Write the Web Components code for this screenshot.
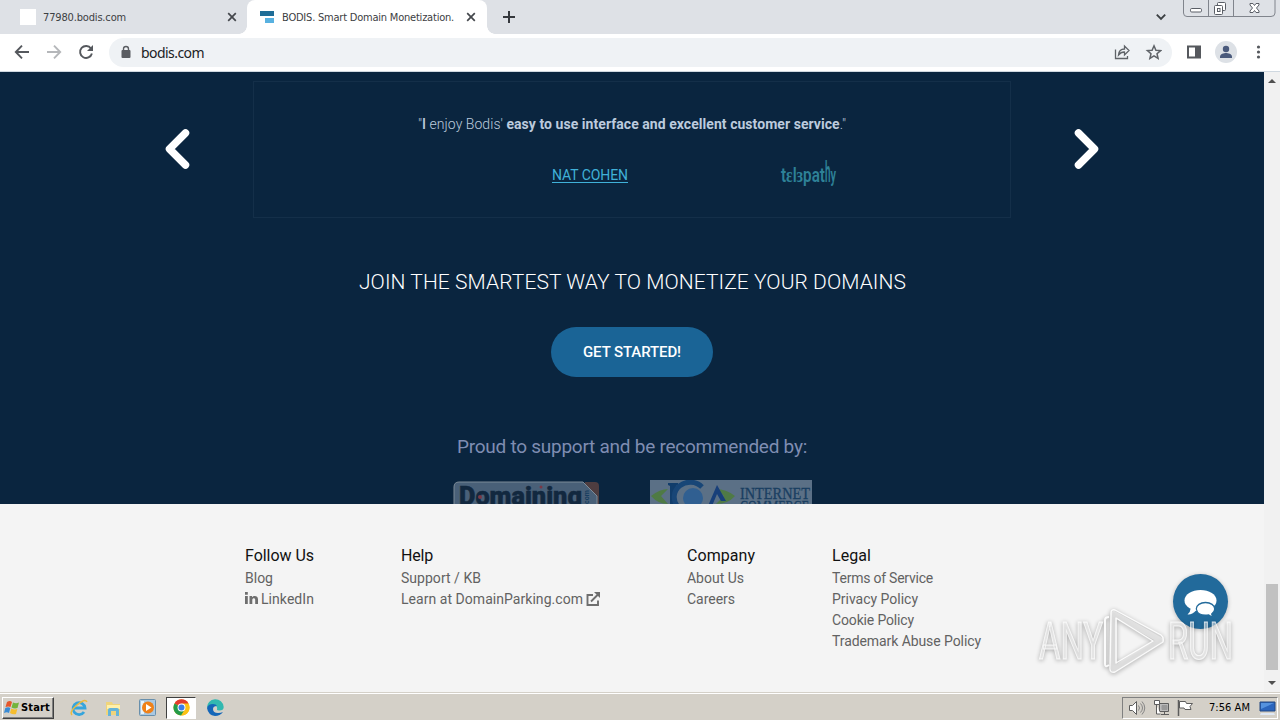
<!DOCTYPE html>
<html lang="en">
<head>
<meta charset="utf-8">
<title>BODIS. Smart Domain Monetization.</title>
<style>
  body { margin: 0; width: 1280px; height: 720px; overflow: hidden; font-family: Roboto, "Liberation Sans", sans-serif; }
</style>
</head>
<body>
<desktop-screen>
  <browser-tabs slot="tabs"></browser-tabs>
  <browser-toolbar slot="toolbar"></browser-toolbar>
  <site-hero slot="page"></site-hero>
  <site-footer slot="page">
    <footer-column heading="Follow Us" w="69" style="width:156px">
      <footer-link w="28">Blog</footer-link>
      <footer-link w="53" icon="in">LinkedIn</footer-link>
    </footer-column>
    <footer-column heading="Help" w="32" style="width:286px">
      <footer-link w="80">Support / KB</footer-link>
      <footer-link w="182" icon="out">Learn at DomainParking.com</footer-link>
    </footer-column>
    <footer-column heading="Company" w="68" style="width:145px">
      <footer-link w="57">About Us</footer-link>
      <footer-link w="48">Careers</footer-link>
    </footer-column>
    <footer-column heading="Legal" w="39" style="width:180px">
      <footer-link w="101">Terms of Service</footer-link>
      <footer-link w="86">Privacy Policy</footer-link>
      <footer-link w="82">Cookie Policy</footer-link>
      <footer-link w="149">Trademark Abuse Policy</footer-link>
    </footer-column>
  </site-footer>
  <scroll-bar slot="scroll"></scroll-bar>
  <win-taskbar slot="taskbar"></win-taskbar>
  <chat-bubble slot="over"></chat-bubble>
  <water-mark slot="over"></water-mark>
</desktop-screen>

<script>
// small helper: every component sets its own shadow markup
class Base extends HTMLElement {
  constructor() {
    super();
    this.attachShadow({ mode: 'open' });
  }
  connectedCallback() {
    this.shadowRoot.innerHTML = '<style>:host,*{box-sizing:border-box}:host{flex:none}svg{display:block;flex:none}</style>' + this.render();
  }
  render() { return '<slot></slot>'; }
}

// single line text, letter spacing is tuned so that the line is "w" pixels wide
class FitText extends Base {
  render() {
    return `<style>:host{display:inline-block;white-space:nowrap;flex:none}</style><slot></slot>`;
  }
  connectedCallback() {
    super.connectedCallback();
    const w = parseFloat(this.getAttribute('w'));
    if (!w) return;
    const real = this.getBoundingClientRect().width;
    this.style.letterSpacing = ((w - real) / this.textContent.length).toFixed(3) + 'px';
  }
}

class DesktopScreen extends Base {
  render() {
    return `
    <style>
      :host{display:flex;flex-direction:column;width:1280px;height:720px;position:relative;overflow:hidden;background:#f4f4f4}
      .view{display:flex;height:620px;flex:none}
      .page{width:1264px;display:flex;flex-direction:column}
    </style>
    <slot name="tabs"></slot>
    <slot name="toolbar"></slot>
    <div class="view"><div class="page"><slot name="page"></slot></div><slot name="scroll"></slot></div>
    <slot name="taskbar"></slot>
    <slot name="over"></slot>`;
  }
}

class BrowserTabs extends Base {
  render() {
    const close = '<svg width="10" height="10" viewBox="0 0 10 10"><path d="M1.2 1.2l7.6 7.6M8.8 1.2L1.2 8.8" stroke="#44474c" stroke-width="1.7"/></svg>';
    return `
    <style>
      :host{display:flex;height:34px;background:#dee1e6;font:11px "DejaVu Sans Condensed","Noto Sans",sans-serif;color:#3c4043}
      .tab{display:flex;align-items:center;height:34px}
      .one{width:247px;padding:0 10px 0 20px}
      .two{width:240px;padding:0 11px 0 13px;background:#fff;border-radius:8px 8px 0 0;position:relative}
      .two::before,.two::after{content:"";position:absolute;bottom:0;width:8px;height:8px}
      .two::before{left:-8px;background:radial-gradient(circle at 0 0,#dee1e6 7.5px,#fff 8px)}
      .two::after{right:-8px;background:radial-gradient(circle at 100% 0,#dee1e6 7.5px,#fff 8px)}
      .fav{width:16px;height:16px;background:#fff;margin-right:7px}
      .gap{flex:1}
      .plus{margin:11px 0 0 15px}
      .chev{margin:13px 17px 0 0}
    </style>
    <div class="tab one"><div class="fav"></div><fit-text w="83">77980.bodis.com</fit-text><div class="gap"></div>${close}</div>
    <div class="tab two">
      <svg width="14" height="12" viewBox="0 0 14 12" style="margin-right:8px"><path d="M0 0h14v5H0z" fill="#1f6d97"/><path d="M5 7h9v5H5z" fill="#58b1e0"/></svg>
      <fit-text w="172">BODIS. Smart Domain Monetization.</fit-text><div class="gap"></div>${close}
    </div>
    <svg class="plus" width="14" height="12" viewBox="0 0 14 12"><path d="M7 0v12M1 6h12" stroke="#35383d" stroke-width="2"/></svg>
    <div class="gap"></div>
    <svg class="chev" width="10" height="8" viewBox="0 0 10 8"><path d="M.8 1.6L5 5.8l4.200-4.200" fill="none" stroke="#3c4043" stroke-width="1.900"/></svg>
    <svg width="97" height="18" viewBox="0 0 97 18" fill="none">
      <path d="M.5 0v13q0 3.500 3.500 3.500h84q4 0 4-3.500V0M25.500 0v16M50.500 0v16" stroke="#80848c"/>
      <g stroke="#5a5e66"><rect x="7.500" y="8.500" width="11" height="3.500" rx="1.200" fill="#fff"/>
      <rect x="34.500" y="2.500" width="8" height="8" rx="1" fill="#fff"/><rect x="31.500" y="5.500" width="8" height="9" rx="1" fill="#fff"/><rect x="34.500" y="8.500" width="2.500" height="3"/>
      <path d="M67 3.500h3l1.500 2 1.500-2h3v1.500L73.500 8l2.500 3v1.500h-3l-1.500-2-1.500 2h-3V11l2.500-3L67 5z" fill="#fff"/></g>
    </svg>`;
  }
}

class BrowserToolbar extends Base {
  render() {
    return `
    <style>
      :host{display:flex;align-items:center;height:38px;background:#fff;border-bottom:1px solid #cfd8e0;padding-left:14px}
      .box{display:flex;align-items:center;width:1063px;height:29px;margin-left:15px;padding:0 10px 0 11px;border-radius:15px;background:#eff2f5;font:14px "Noto Sans",sans-serif;color:#202124}
      .gap{flex:1}
    </style>
    <svg width="80" height="20" viewBox="0 0 80 20" fill="none" stroke-width="1.900" style="margin-top:-1px">
      <path d="M15 10H2M8 3.700L1.800 10 8 16.300" stroke="#55585d"/>
      <path d="M33 10h13M40 3.700l6.200 6.300L40 16.300" stroke="#b5b7ba"/>
      <path d="M77 6.500A6 6 0 1 0 77.900 11.500" stroke="#55585d"/><path d="M79 3v6h-6z" fill="#55585d"/>
    </svg>
    <div class="box">
      <svg width="12" height="14" viewBox="0 0 12 14" style="margin:-1px 9px 0 0"><rect x="1.500" y="5" width="9" height="8" rx="1" fill="#5a5d62"/><path d="M3.500 6V4a2.500 2.500 0 0 1 5 0v2" fill="none" stroke="#5a5d62" stroke-width="1.400"/></svg>
      <fit-text w="63">bodis.com</fit-text><div class="gap"></div>
      <svg width="48" height="18" viewBox="0 0 48 18" fill="none" stroke="#5f6368" stroke-width="1.300" style="margin-top:-1px">
        <path d="M1.500 6.500v9h12v-2.500"/><path d="M4.500 12Q5 6 10.500 6V3l4.500 4.500L10.500 12V9Q7 8.800 4.500 12z"/>
        <path d="M40 2.800l1.900 4.400 4.700.4-3.600 3.100 1.100 4.700-4.100-2.500-4.100 2.500L37 10.700l-3.600-3.100 4.700-.4z" stroke-width="1.500"/>
      </svg>
    </div>
    <svg width="108" height="24" viewBox="0 0 108 24" style="margin-top:-1px">
      <rect x="16" y="6.500" width="12" height="11" fill="none" stroke="#55585d" stroke-width="2"/><path d="M23 6h6v12h-6z" fill="#55585d"/>
      <circle cx="54" cy="12" r="11" fill="#dde1e6"/><circle cx="54" cy="9" r="3.200" fill="#4a5a7c"/><path d="M48 18v-1.500c0-2.400 4-3.500 6-3.500s6 1.100 6 3.500V18z" fill="#4a5a7c"/>
      <g fill="#55585d"><circle cx="86.500" cy="7" r="1.600"/><circle cx="86.500" cy="12" r="1.600"/><circle cx="86.500" cy="17" r="1.600"/></g>
    </svg>`;
  }
}

class TestimonialCard extends Base {
  render() {
    return `
    <style>
      :host{display:block;width:758px;height:137px;border:1px solid #142f49;color:#bccbdd;padding:32px 0 0 164px;font-size:14px;font-weight:300}
      .quote{height:20px;line-height:20px}
      b{font-weight:700}
      .by{display:flex;align-items:center;height:42px;margin-top:20px;padding-left:134px}
      a{color:#40b1d8;font-weight:400}
      a fit-text{text-decoration:underline;text-underline-offset:2px}
    </style>
    <div class="quote"><fit-text w="428">"<span style="font-weight:500">I</span> enjoy Bodis' <b>easy to use interface and excellent customer service</b>."</fit-text></div>
    <div class="by"><a><fit-text w="76">NAT COHEN</fit-text></a>
      <svg width="60" height="36" viewBox="0 0 60 36" style="margin-left:151px" font-family="Roboto" font-weight="600" fill="#2e8197">
        <g font-size="21" transform="translate(0 25)">
          <text x="2" textLength="44" lengthAdjust="spacingAndGlyphs">tɛlɜpat</text>
          <text x="46" font-size="29" textLength="5.500" lengthAdjust="spacingAndGlyphs">h</text>
          <text x="51.500" textLength="5.500" lengthAdjust="spacingAndGlyphs">y</text>
        </g>
      </svg>
    </div>`;
  }
}

class SiteHero extends Base {
  render() {
    return `
    <style>
      :host{display:flex;flex-direction:column;align-items:center;height:432px;background:#0a253f;overflow:hidden}
      .slider{display:flex;align-items:center;justify-content:space-between;width:936px;height:137px;margin-top:9px;flex:none}
      .arrow{margin-top:-2px}
      h2{margin:51px 0 0 1px;height:26px;line-height:26px;font-size:21px;font-weight:300;color:#fff;flex:none}
      .btn{display:flex;align-items:center;justify-content:center;width:162px;height:50px;margin-top:32px;border-radius:25px;background:#1a6496;color:#fff;font-size:15px;font-weight:500;flex:none}
      .proud{margin-top:57px;height:26px;line-height:26px;font-size:19px;font-weight:400;color:#7f8db2;flex:none}
      .logos{display:flex;width:360px;height:60px;margin-top:20px;flex:none}
    </style>
    <div class="slider">
      <svg class="arrow" width="28" height="42" viewBox="0 0 28 42"><path d="M21.500 5l-16 16 16 16" fill="none" stroke="#fff" stroke-width="7.500" stroke-linecap="round" stroke-linejoin="round"/></svg>
      <testimonial-card></testimonial-card>
      <svg class="arrow" width="28" height="42" viewBox="0 0 28 42"><path d="M6.500 5l16 16-16 16" fill="none" stroke="#fff" stroke-width="7.500" stroke-linecap="round" stroke-linejoin="round"/></svg>
    </div>
    <h2><fit-text w="547">JOIN THE SMARTEST WAY TO MONETIZE YOUR DOMAINS</fit-text></h2>
    <div class="btn"><fit-text w="98">GET STARTED!</fit-text></div>
    <div class="proud"><fit-text w="350">Proud to support and be recommended by:</fit-text></div>
    <div class="logos">
      <svg width="148" height="50" viewBox="-1 0 148 50">
        <path d="M132 2h10q4 0 4 4v44h-14z" fill="#4e3d40"/>
        <path d="M6 2h124l14 14v34H1V7q0-5 5-5z" fill="#496078" stroke="#7d8b98"/>
        <text x="6" y="24.500" font-family="Roboto" font-weight="900" font-size="26" fill="#12283f" stroke="#12283f" stroke-width=".5" textLength="123" lengthAdjust="spacingAndGlyphs">Domaining</text>
        <circle cx="27" cy="17" r="2" fill="#7b3846"/><circle cx="88" cy="7" r="1.500" fill="#7b3846"/>
        <text x="-26" y="136" transform="rotate(-90)" font-family="Roboto" font-weight="700" font-size="7" fill="#173d5f">.com</text>
      </svg>
      <svg width="162" height="50" viewBox="0 0 162 50" style="margin-left:50px">
        <path d="M0 0h162v50H0z" fill="#5b7086"/>
        <path d="M1 16Q10 9 18 9L11 16l7 8Q8 24 1 16zM85 16Q76 9 66 9l8 7-8 8q12 0 19-8z" fill="#4f7a45"/>
        <path d="M18 3h10v2l-2 1v18h-6V6l-2-1z" fill="#113d6b"/>
        <path d="M52 7A16 15 0 1 0 50 29" fill="none" stroke="#184677" stroke-width="5"/>
        <circle cx="43" cy="18" r="10" fill="#305f91"/>
        <path d="M58 26L67 5l9 16h-5l-4-7-5 12z" fill="#183f7a"/>
        <g font-family="Liberation Serif" font-size="16" fill="#193e61" stroke="#193e61" stroke-width=".3"><text x="90" y="18.500" textLength="70" lengthAdjust="spacingAndGlyphs">INTERNET</text>
        <text x="90" y="32" textLength="69" lengthAdjust="spacingAndGlyphs">COMMERCE</text></g>
      </svg>
    </div>`;
  }
}

class SiteFooter extends Base {
  render() {
    return `
    <style>:host{display:flex;height:188px;background:#f4f4f4;padding:41px 0 0 245px}</style>
    <slot></slot>`;
  }
}

class FooterColumn extends Base {
  render() {
    return `
    <style>
      :host{display:flex;flex-direction:column;flex:none}
      .head{height:23px;line-height:22px;font-size:16px;color:#111}
    </style>
    <div class="head"><fit-text w="${this.getAttribute('w')}">${this.getAttribute('heading')}</fit-text></div>
    <slot></slot>`;
  }
}

class FooterLink extends Base {
  connectedCallback() {
    const text = this.textContent;
    super.connectedCallback();
    this.shadowRoot.querySelector('fit-text').textContent = text;
    this.shadowRoot.querySelector('fit-text').connectedCallback();
  }
  render() {
    const icon = this.getAttribute('icon');
    const before = icon === 'in' ? '<svg width="16" height="15" viewBox="0 0 16 15"><path d="M0 4h2.800v8H0zM0 0h2.800v2.800H0zM4.500 4H7v1.200C8.500 3.200 13 3.200 13 7.200V12h-2.800V7.800c0-2.200-2.900-2-2.900 0V12H4.500z" fill="#6e6e6e"/></svg>' : '';
    const after = icon === 'out' ? '<svg width="15" height="16" viewBox="0 0 15 16" style="margin-left:3px" fill="none" stroke="#6e6e6e" stroke-width="1.900"><path d="M7 3H1.500v10H12V8.500M5 9.500L12 2.500"/><path d="M8 0h6v6z" fill="#6e6e6e" stroke="none"/></svg>' : '';
    return `
    <style>:host{display:flex;align-items:center;height:21px;line-height:21px;font-size:14px;color:#626262}</style>
    ${before}<fit-text w="${this.getAttribute('w')}"></fit-text>${after}`;
  }
}

class ScrollBar extends Base {
  render() {
    return `
    <style>
      :host{display:flex;flex-direction:column;align-items:center;width:16px;height:620px;background:#f1f1f1;padding-top:7px}
      .thumb{width:12px;height:86px;margin:501px 0 11px;background:#c1c1c1}
    </style>
    <svg width="8" height="4" viewBox="0 0 8 4"><path d="M0 4l4-4 4 4z" fill="#505050"/></svg>
    <div class="thumb"></div>
    <svg width="8" height="4" viewBox="0 0 8 4"><path d="M0 0l4 4 4-4z" fill="#505050"/></svg>`;
  }
}

class WinTaskbar extends Base {
  render() {
    return `
    <style>
      :host{display:flex;align-items:center;height:28px;background:#d4d0c8;border-top:1px solid #d4d0c8;box-shadow:inset 0 1px #fff;padding:2px 2px 0;font:11px "DejaVu Sans Condensed","Noto Sans",sans-serif;color:#000}
      .start{display:flex;align-items:center;width:52px;height:22px;padding-left:1px;border:1px solid;border-color:#fff #404040 #404040 #fff;box-shadow:inset -1px -1px #808080;font-weight:700}
      .app{width:30px;height:22px;margin-left:4px;display:flex;align-items:center;justify-content:center}
      .app.on{background:#fff;border:1px solid;border-color:#404040 #fff #fff #404040}
      .gap{flex:1}
      .tray{display:flex;align-items:center;width:156px;height:22px;border:1px solid;border-color:#808080 #fff #fff #808080;padding-left:5px}
    </style>
    <div class="start">
      <svg width="16" height="16" viewBox="0 0 16 16" style="margin-right:1px"><path d="M3 2q3-2 5 0L6.500 7q-2-1-5 0z" fill="#e5572b"/><path d="M9 2.500q3 1.500 6 0L13.500 8q-3 1-6-.5z" fill="#73b43c"/><path d="M1.300 8q3-1.500 5 0L5 13q-2-1.500-5 0z" fill="#398bd5"/><path d="M7.300 8.500q3 1.500 6 .5L12 14q-3 1-6-1z" fill="#f6bd2d"/></svg>
      <fit-text w="29">Start</fit-text></div>
    <div class="app" style="margin-left:10px"><svg width="18" height="18" viewBox="0 0 18 18" fill="none"><path d="M14 13A6 6 0 1 1 15 9H4" stroke="#36a5dc" stroke-width="2.800"/><path d="M2 16Q-1 13 7 6T17 3" stroke="#edbb3d" stroke-width="1.500"/></svg></div>
    <div class="app"><svg width="18" height="18" viewBox="0 0 18 18"><path d="M2 3h6l1 2h7v11H2z" fill="#efd47b"/><path d="M3 6h13v4H3z" fill="#fff0aa"/><path d="M4 17v-6q0-2 2-2h7q2 0 2 2v6h-3v-5H7v5z" fill="#65b4d8"/></svg></div>
    <div class="app"><svg width="17" height="17" viewBox="0 0 17 17"><rect x=".5" y=".5" width="16" height="16" rx="1" fill="#a9c8e2" stroke="#688fac"/><path d="M2 2h3v13H2z" fill="#e5f3fc"/><circle cx="9" cy="8.500" r="6" fill="#ef8119"/><path d="M7 5l5.500 3.500L7 12z" fill="#fff"/></svg></div>
    <div class="app on"><svg width="17" height="17" viewBox="0 0 18 18"><circle cx="9" cy="9" r="8.500" fill="#fbc116"/><path d="M9 9L1.600 4.700A8.500 8.500 0 0 1 16.400 4.700z" fill="#e33b2e"/><path d="M9 9L1.600 4.700A8.500 8.500 0 0 0 8.500 17.500L12.500 11z" fill="#249b4a"/><path d="M9 4.800h7.400A8.500 8.500 0 0 1 9 17.500L12.800 11z" fill="#fbc116"/><circle cx="9" cy="9" r="4.200" fill="#fff"/><circle cx="9" cy="9" r="3.200" fill="#3b7de9"/></svg></div>
    <div class="app"><svg width="17" height="17" viewBox="0 0 17 17"><path d="M0 9A8.300 8.300 0 0 1 16.700 8q0 3.500-4.500 3.500-3 0-2-2Q10 6 6.500 6 1 6 0 9z" fill="#32b8b0"/><path d="M0 9q1-4 6-4 3 0 4 2-4 0-4 3 0 4 5 4 3 0 5-1-3 4-8 4Q1 16 0 9z" fill="#1466b8"/></svg></div>
    <div class="gap"></div>
    <div class="tray">
      <svg width="78" height="18" viewBox="0 0 78 18" fill="#fff" stroke="#5d5d5d">
        <path d="M1.500 6.500h3l4-4v13l-4-4h-3z"/><path d="M10.500 6.500q2 2.500 0 5M12.500 4.500q4 4.500 0 9M14 2.500q5.500 6.500 0 13" fill="none" stroke="#858585"/>
        <path d="M31.500 4.500h9v8h-9z" fill="#bbb"/><path d="M33 15.500h8M36.500 13v2M26.500 1.500h5v4h-5zM28.500 6v9h4" /><path d="M34 6.500h5v4h-5z" fill="#999" stroke="#999"/>
        <path d="M50.500 1v16" stroke-width="1.500"/><path d="M51.500 2.500h6l1 2h6l-2.500 3 1 3h-6l-1-1.500h-4.500z"/>
      </svg>
      <fit-text w="41" style="margin-left:3px">7:56 AM</fit-text>
      <svg width="17" height="14" viewBox="0 0 17 14" style="margin-left:9px"><path d="M1 1h15v9H1z" fill="#2b65bd" stroke="#244980"/><path d="M2 2h13L2 8z" fill="#5592de"/><path d="M2 12h13l1 2H1z" fill="#dfe8f4"/></svg>
    </div>`;
  }
}

class ChatBubble extends Base {
  render() {
    return `
    <style>:host{position:absolute;left:1173px;top:574px;width:55px;height:55px;border-radius:50%;background:#226a9b;box-shadow:0 1px 4px rgba(0,0,0,.25)}</style>
    <svg width="55" height="55" viewBox="0 0 55 55"><path d="M27.500 37q-2.500 0-4.500-.5Q19 41 14.500 40.500q3-2.500 3-5.500l3-4z" fill="#fff"/><ellipse cx="27.500" cy="26.500" rx="16" ry="10.500" fill="#fff"/>
    <path d="M32.500 28.500c5.300 0 9.200 2.800 9.200 6.500q0 3-3 5 .3 1.500 2 3-3 0-5-2-11 1.500-12.400-6c0-3.700 3.900-6.500 9.200-6.500z" fill="#fff" stroke="#226a9b" stroke-width="1.300"/></svg>`;
  }
}

class WaterMark extends Base {
  render() {
    return `
    <style>:host{position:absolute;left:1030px;top:600px;width:215px;height:80px;filter:drop-shadow(0 1px 2px rgba(0,0,0,.45))}</style>
    <svg width="215" height="80" viewBox="0 0 215 80" fill="#fff" fill-opacity=".5" stroke="#fff" stroke-opacity=".75" stroke-width="1.200" font-family="Roboto" font-size="51">
      <text x="9" y="59" textLength="64" lengthAdjust="spacingAndGlyphs">ANY</text>
      <text x="138" y="59" textLength="65" lengthAdjust="spacingAndGlyphs">RUN</text>
      <g fill="none" stroke-linejoin="round" stroke-opacity=".9">
        <path d="M84 14v55L130 40 84 14z" stroke-width="6" stroke-opacity=".4"/>
        <path d="M81 13q0-4 4-3l46 25q3 2 2 7L85 72q-5 1-5-3z" stroke-width="1.400"/>
        <path d="M86 18v45l37-22z" stroke-width="1.400"/>
        <path d="M79 17q-4 0-4 3v44q0 4 4 1" stroke-width="2"/>
      </g>
    </svg>`;
  }
}

customElements.define('desktop-screen', DesktopScreen);
customElements.define('fit-text', FitText);
customElements.define('browser-tabs', BrowserTabs);
customElements.define('browser-toolbar', BrowserToolbar);
customElements.define('testimonial-card', TestimonialCard);
customElements.define('site-hero', SiteHero);
customElements.define('site-footer', SiteFooter);
customElements.define('footer-column', FooterColumn);
customElements.define('footer-link', FooterLink);
customElements.define('scroll-bar', ScrollBar);
customElements.define('win-taskbar', WinTaskbar);
customElements.define('chat-bubble', ChatBubble);
customElements.define('water-mark', WaterMark);
</script>
</body>
</html>
